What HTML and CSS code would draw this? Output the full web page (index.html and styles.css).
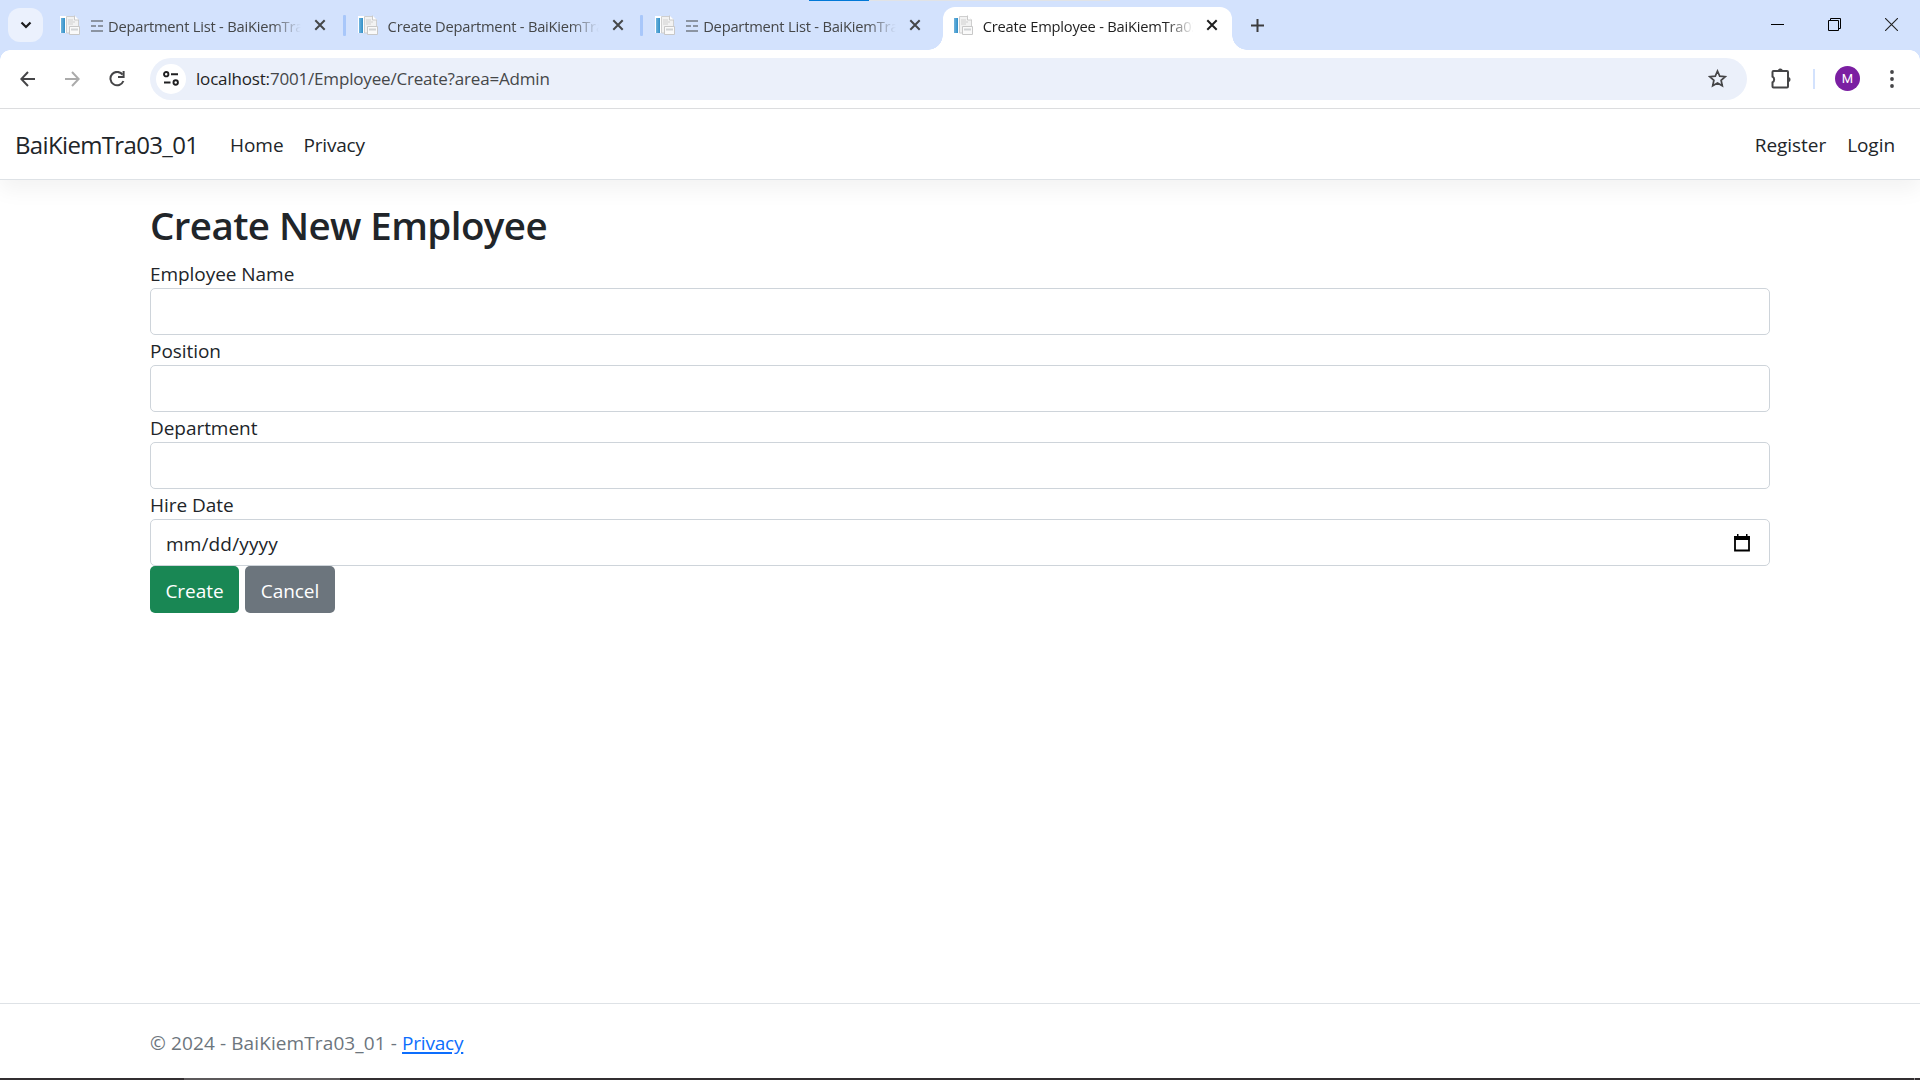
FILE: index.html
```html
<!DOCTYPE html>
<html lang="en">
<head>
<meta charset="utf-8">
<title>Create Employee - BaiKiemTra03_01</title>
<link rel="stylesheet" href="styles.css">
</head>
<body>
<svg class="defs" width="0" height="0">
  <linearGradient id="book" x1="0" x2="1" y1="0" y2="0"><stop offset="0" stop-color="#6fb3dc"/><stop offset="1" stop-color="#2f8fc8"/></linearGradient>
  <symbol id="favicon" viewBox="0 0 20 20">
    <path d="M0 1h12v17H0z" fill="#fff"/><path d="M1 3h4v15H1z" fill="url(#book)"/>
    <path d="M6.500 1.500h8l4 3.500v13h-12z" fill="#f2f2f2" stroke="#cfcfcf"/>
    <path d="M8 5h5M8 7h7M8 9h5" stroke="#d0d0d0"/><path d="M14.500.5V5H19" fill="#fff" stroke="#c9c9c9"/>
    <path d="M9.500 11.500h10v8h-10z" fill="#fafafa" stroke="#c8c8c8"/><path d="M11 13.500h7v2h-7z" fill="#d0d3d5"/>
  </symbol>
  <symbol id="list" viewBox="0 0 12 12"><path d="M0 1h12M0 11h12" stroke="currentColor" stroke-width="1.200"/><path d="M0 6h5M7 6h5" stroke="currentColor" stroke-width="1.200"/></symbol>
  <symbol id="close" viewBox="0 0 12 12"><path d="M1.300 1.300l9.400 9.400M10.700 1.300l-9.400 9.400" stroke="currentColor" stroke-width="2"/></symbol>
</svg>
<header class="tabstrip">
  <div class="loading"><i></i></div>
  <button class="search-tabs"><svg width="12" height="8" viewBox="0 0 12 8"><path d="M1.500 1.500L6 6l4.500-4.500" fill="none" stroke="#1b1b1d" stroke-width="2.200"/></svg></button>
  <div class="tab"><svg class="fav"><use href="#favicon"/></svg><span class="title"><svg class="bars"><use href="#list"/></svg>Department List - BaiKiemTra03_01</span><svg class="x"><use href="#close"/></svg><i class="sep"></i></div>
  <div class="tab"><svg class="fav"><use href="#favicon"/></svg><span class="title">Create Department - BaiKiemTra03_01</span><svg class="x"><use href="#close"/></svg><i class="sep"></i></div>
  <div class="tab"><svg class="fav"><use href="#favicon"/></svg><span class="title"><svg class="bars"><use href="#list"/></svg>Department List - BaiKiemTra03_01</span><svg class="x"><use href="#close"/></svg></div>
  <div class="tab active"><svg class="fav"><use href="#favicon"/></svg><span class="title">Create Employee - BaiKiemTra03_01</span><svg class="x"><use href="#close"/></svg></div>
  <svg class="plus" width="13" height="13" viewBox="0 0 13 13"><path d="M6.500 0v13M0 6.500h13" stroke="#3c3c3e" stroke-width="2"/></svg>
  <div class="window-buttons">
    <svg width="13" height="13" viewBox="0 0 13 13"><path d="M0 6.500h13" stroke="#000"/></svg>
    <svg width="13" height="13" viewBox="0 0 13 13"><path d="M.5 2.500h10v10H.5zM2.500 2.500v-2h10v10h-2" fill="none" stroke="#000"/></svg>
    <svg width="13" height="13" viewBox="0 0 13 13"><path d="M0 0l13 13M13 0L0 13" stroke="#222" stroke-width="1.100"/></svg>
  </div>
</header>
<div class="toolbar">
  <svg class="back" width="15" height="16" viewBox="0 0 15 16"><path d="M15 8H1.500M8 1L1.300 8 8 15" fill="none" stroke="#454547" stroke-width="2"/></svg>
  <svg class="forward" width="15" height="16" viewBox="0 0 15 16"><path d="M0 8h13.500M7 1l6.700 7L7 15" fill="none" stroke="#ababab" stroke-width="2"/></svg>
  <svg class="reload" width="16" height="16" viewBox="0 0 16 16"><path d="M13.600 3.700A6.700 6.700 0 1 0 14.400 10" fill="none" stroke="#454547" stroke-width="2"/><path d="M14.600 0v6H9" fill="none" stroke="#454547" stroke-width="2"/></svg>
  <div class="omnibox">
    <span class="site-info"><svg width="16" height="15" viewBox="0 0 16 15"><g fill="none" stroke="#1f1f21" stroke-width="1.900"><circle cx="3.200" cy="3.200" r="2.200"/><circle cx="12.700" cy="11.500" r="2.200"/><path d="M8 3.200h7M1 11.500h6.500"/></g></svg></span>
    <span class="url"><b>localhost:</b>7001/Employee/Create?area=Admin</span>
    <svg class="star" width="19" height="19" viewBox="0 0 19 19"><path d="M9.500 2l2.200 5.100 5.600.5-4.200 3.700 1.200 5.500-4.800-2.900-4.800 2.900 1.200-5.500L1.700 7.600l5.600-.5z" fill="none" stroke="#454547" stroke-width="1.700"/></svg>
  </div>
  <svg class="puzzle" width="21" height="21" viewBox="0 0 21 21"><path d="M1.500 4Q1.500 3 2.500 3H16q1 0 1 1v14.500q0 1-1 1H2.500q-1 0-1-1v-4.200a3.200 3.200 0 0 0 0-5.600z" fill="none" stroke="#454547" stroke-width="2"/><path d="M6.800 3a2.500 2.500 0 0 1 5 0zM17 8.900a2.500 2.500 0 0 1 0 5z" fill="#454547"/></svg>
  <i class="divider"></i>
  <span class="avatar">M</span>
  <svg class="dots" width="4" height="18" viewBox="0 0 4 18"><g fill="#454547"><circle cx="2" cy="2" r="1.900"/><circle cx="2" cy="9" r="1.900"/><circle cx="2" cy="16" r="1.900"/></g></svg>
</div>
<nav class="navbar">
  <a class="brand">BaiKiemTra03_01</a><a class="home">Home</a><a class="privacy">Privacy</a>
  <span class="account"><a>Register</a><a>Login</a></span>
</nav>
<main class="container">
  <h1>Create New Employee</h1>
  <label>Employee Name</label><div class="control"></div>
  <label>Position</label><div class="control"></div>
  <label>Department</label><div class="control"></div>
  <label>Hire Date</label>
  <div class="control date"><span>mm/dd/yyyy</span><svg width="16" height="18" viewBox="0 0 16 18"><path d="M1 3h14v13.500H1z" fill="none" stroke="#000" stroke-width="1.800"/><path d="M.2 2h15.600v4H.2zM3 0h1.500v3H3zM12 0h1.500v3H12z"/></svg></div>
  <div class="actions"><button class="btn create">Create</button><button class="btn cancel">Cancel</button></div>
</main>
<footer class="footer"><span>© 2024 - BaiKiemTra03_01 - </span><a>Privacy</a></footer>
<div class="taskbar"><i class="task"></i><i class="peek"></i></div>
</body>
</html>
```
FILE: styles.css
```css
* { box-sizing: border-box; }
body { margin: 0; height: 1080px; overflow: hidden; display: flex; flex-direction: column; background: #fff; color: #212529; font: 19px/30px "Open Sans", "Noto Sans", sans-serif; letter-spacing: -.05px; }
svg { display: block; flex: none; }
.defs { position: absolute; }
button { border: 0; padding: 0; font: inherit; letter-spacing: inherit; }

.tabstrip { position: relative; height: 50px; flex: none; display: flex; background: #d3e2fd; }
.loading { position: absolute; top: 0; left: 809px; width: 301px; height: 1px; background: #e1e3e6; }
.loading i { display: block; width: 60px; height: 1px; background: #0078d7; }
.search-tabs { width: 35px; height: 34px; margin: 8px 2px 0 8px; border-radius: 12px; background: #ebf1fd; display: grid; place-items: center; }
.tab { position: relative; width: 297.6px; height: 50px; padding-left: 15px; display: flex; align-items: center; flex: none; color: #454749; }
.tab .fav { width: 20px; height: 20px; margin-right: 10px; }
.title { width: 211px; height: 30px; padding-top: 1px; overflow: hidden; white-space: nowrap; display: flex; align-items: center; font-size: 14.7px; letter-spacing: -.22px; mask-image: linear-gradient(90deg, #000 182px, transparent 211px); }
.bars { width: 12px; height: 12px; margin: 0 5px 0 1px; }
.x { width: 12px; height: 12px; margin-left: 13px; }
.tab:not(.active) .x { margin-left: 13px; }
.sep { position: absolute; right: -3px; top: 15px; width: 3px; height: 21px; border-radius: 1px; background: #a8c7fa; }
.active { width: 289px; height: 43px; margin: 7px 0 0 5px; padding: 0 0 7px 10px; border-radius: 12px 12px 0 0; background: #fff; color: #1f1f1f; }
.tab .title { flex: none; }
.active .title { width: 210px; margin-right: 0; }
.active .x { margin-left: 13px; }
.active::before, .active::after { content: ""; position: absolute; bottom: 0; width: 15px; height: 15px; }
.active::before { left: -15px; background: radial-gradient(circle at 0 0, transparent 14.5px, #fff 15px); }
.active::after { right: -15px; background: radial-gradient(circle at 100% 0, transparent 14.5px, #fff 15px); }
.plus { margin: 19px 0 0 19px; }
.window-buttons { display: flex; gap: 44px; margin: 18px 22px 0 auto; }

.toolbar { position: relative; height: 59px; flex: none; display: flex; align-items: center; padding-bottom: 1px; border-bottom: 1px solid #dcdddf; background: #fff; }
.toolbar::before { content: ""; position: absolute; inset: 0 0 auto; height: 10px; background: radial-gradient(circle at 10px 10px, transparent 9.5px, #d3e2fd 10px) 0 0 / 10px 10px no-repeat, radial-gradient(circle at 0 10px, transparent 9.5px, #d3e2fd 10px) 100% 0 / 10px 10px no-repeat; }
.back { margin-left: 20px; }
.forward { margin-left: 30px; }
.reload { margin-left: 29px; }
.omnibox { margin-left: 25px; width: 1597px; height: 42px; border-radius: 21px; background: #ebf0fa; display: flex; align-items: center; padding-left: 6px; }
.site-info { width: 30px; height: 30px; border-radius: 50%; background: #fff; display: grid; place-items: center; }
.url { margin-left: 10px; padding-top: 1px; font-size: 17px; letter-spacing: -.18px; color: #454749; white-space: nowrap; }
.url b { font-weight: 400; color: #1f1f1f; }
.star { margin: 0 20px 0 auto; }
.puzzle { margin-left: 24px; }
.divider { width: 2px; height: 20px; margin-left: 21px; background: #d3e2fd; }
.avatar { width: 25px; height: 25px; margin-left: 20px; border-radius: 50%; background: #7b1fa2; color: #fff; font: 13px/25px Roboto, sans-serif; text-align: center; }
.dots { margin-left: 30px; }

.navbar { height: 71px; flex: none; display: flex; align-items: center; padding: 1px 25px 0 15px; border-bottom: 1px solid #dee2e6; box-shadow: 0 10px 20px rgba(0,0,0,.05); }
.brand { width: 215px; font-size: 24px; letter-spacing: -.65px; }
.home { width: 73.5px; }
.privacy { letter-spacing: -.2px; }
.account { margin-left: auto; display: flex; gap: 21px; }

.container { width: 1620px; margin: 19px auto 0; display: flex; flex-direction: column; }
h1 { height: 59px; margin: 0; font-size: 38.5px; line-height: 52px; font-weight: 600; letter-spacing: -.58px; }
label { height: 30px; line-height: 32px; }
.control { height: 47px; border: 1px solid #ced4da; border-radius: 5px; }
.date { display: flex; align-items: center; justify-content: space-between; padding: 1px 19px 0 15px; }
.date span { padding-top: 1px; letter-spacing: .15px; }
.actions { display: flex; gap: 6px; }
.btn { width: 89px; height: 47px; padding-top: 2px; border-radius: 5px; color: #fff; background: #198754; }
.cancel { width: 90px; background: #6c757d; }
.footer { margin-top: auto; height: 75px; flex: none; border-top: 1px solid #dee2e6; padding: 24px 150px 0; color: #6c757d; white-space: pre; }
.footer span { letter-spacing: .11px; }
.footer a { color: #0d6efd; letter-spacing: -.2px; text-decoration: underline; text-decoration-thickness: 2px; text-underline-offset: 2px; }
.taskbar { height: 2px; flex: none; display: flex; background: #332f31; }
.task { width: 156px; margin-left: 184px; background: #5c595b; }
.peek { width: 1px; margin: 0 5px 0 auto; background: #8c8a8b; }
```
